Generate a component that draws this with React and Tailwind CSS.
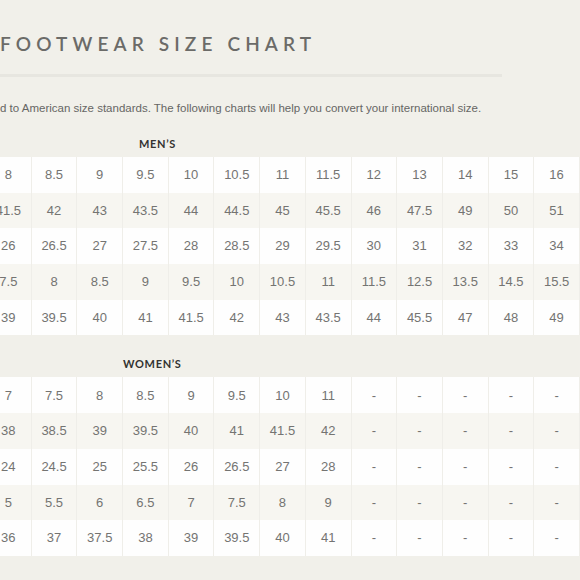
const men = [
  ['8', '8.5', '9', '9.5', '10', '10.5', '11', '11.5', '12', '13', '14', '15', '16'],
  ['41.5', '42', '43', '43.5', '44', '44.5', '45', '45.5', '46', '47.5', '49', '50', '51'],
  ['26', '26.5', '27', '27.5', '28', '28.5', '29', '29.5', '30', '31', '32', '33', '34'],
  ['7.5', '8', '8.5', '9', '9.5', '10', '10.5', '11', '11.5', '12.5', '13.5', '14.5', '15.5'],
  ['39', '39.5', '40', '41', '41.5', '42', '43', '43.5', '44', '45.5', '47', '48', '49'],
]

const women = [
  ['7', '7.5', '8', '8.5', '9', '9.5', '10', '11', '-', '-', '-', '-', '-'],
  ['38', '38.5', '39', '39.5', '40', '41', '41.5', '42', '-', '-', '-', '-', '-'],
  ['24', '24.5', '25', '25.5', '26', '26.5', '27', '28', '-', '-', '-', '-', '-'],
  ['5', '5.5', '6', '6.5', '7', '7.5', '8', '9', '-', '-', '-', '-', '-'],
  ['36', '37', '37.5', '38', '39', '39.5', '40', '41', '-', '-', '-', '-', '-'],
]

function SizeTable({ rows }) {
  return (
    <div className="ml-[-14px] w-[594px]">
      {rows.map((row, r) => (
        <div
          key={r}
          className={`grid grid-cols-[repeat(13,45.7px)] h-[35.7px] ${r % 2 ? 'bg-[#f7f6f1]' : 'bg-[#fefefe]'}`}
        >
          {row.map((v, c) => (
            <div
              key={c}
              className="flex items-center justify-center border-r-[1.5px] border-[#efeee9] text-[13px] text-[#747472]"
            >
              {v}
            </div>
          ))}
        </div>
      ))}
    </div>
  )
}

export default function App() {
  return (
    <div className="w-[580px] h-[580px] overflow-hidden bg-[#f1f0ea] font-['Liberation_Sans',Arial,sans-serif]">
      <h1 className="pt-[31px] h-[60px] leading-[26px] text-[19px] tracking-[0.27em] text-[#6b6b68] font-['Lato',sans-serif] font-semibold whitespace-nowrap">
        FOOTWEAR SIZE CHART
      </h1>
      <div className="mt-[14px] w-[502px] h-[3px] bg-[#e7e6e0]" />
      <p className="mt-[24px] text-[11.5px] leading-[14px] text-[#666664] whitespace-nowrap">
        d to American size standards. The following charts will help you convert your international size.
      </p>

      <div className="mt-[22px] h-[20px] pl-[139px] text-[11px] leading-[14px] font-bold text-[#333331] tracking-[0.06em] font-['Lato',sans-serif]">
        MEN’S
      </div>
      <SizeTable rows={men} />

      <div className="mt-[22px] h-[20px] pl-[123px] text-[11px] leading-[14px] font-bold text-[#333331] tracking-[0.06em] font-['Lato',sans-serif]">
        WOMEN’S
      </div>
      <SizeTable rows={women} />
    </div>
  )
}
